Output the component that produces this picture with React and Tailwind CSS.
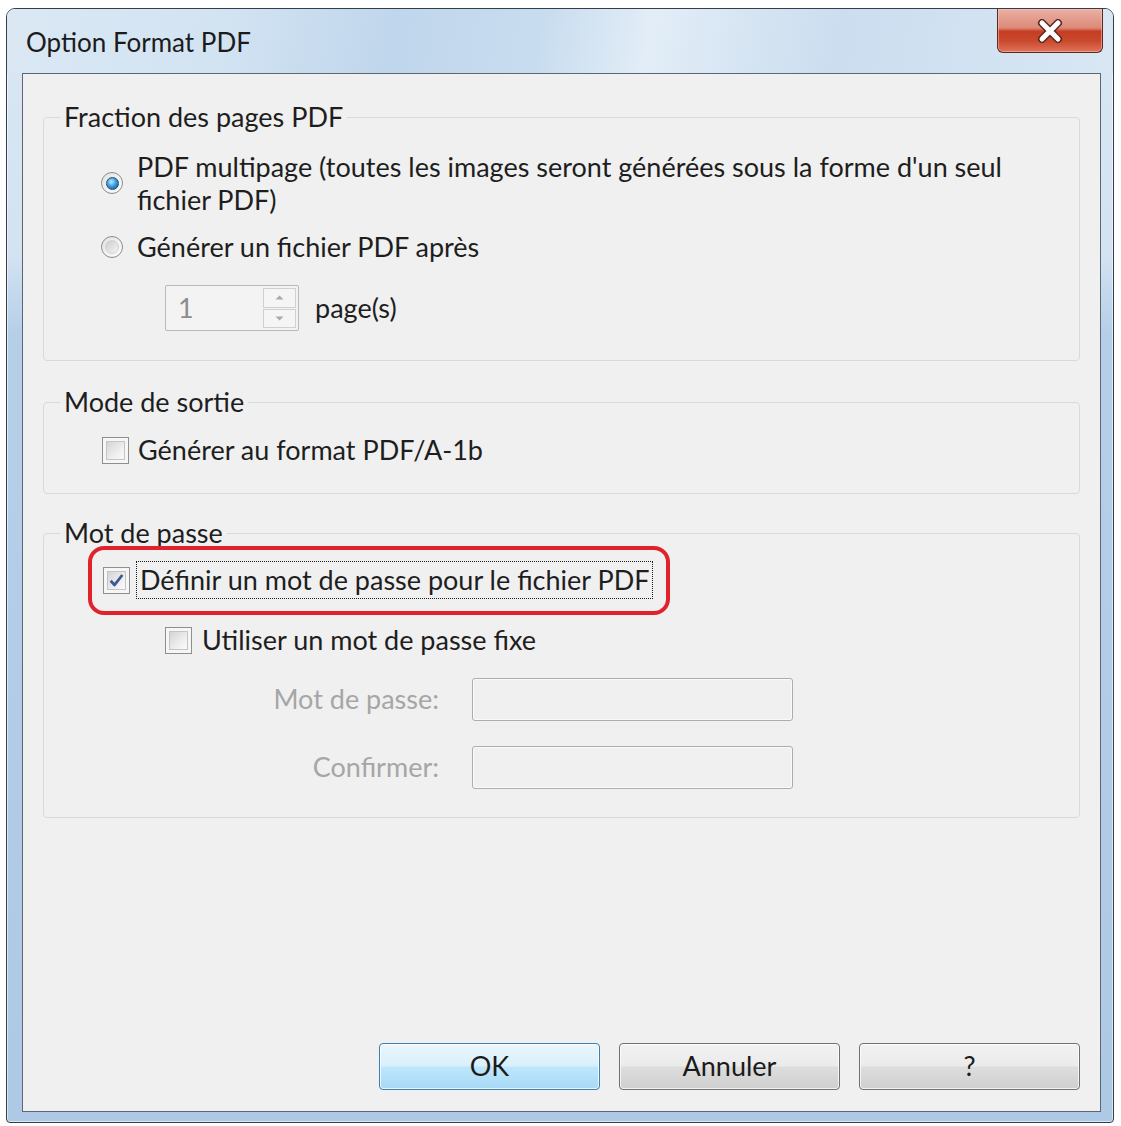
import React from "react";

function Radio({ checked }) {
  return (
    <span className="flex h-[22px] w-[22px] shrink-0 items-center justify-center rounded-full border border-[#8a8c8e] bg-[linear-gradient(135deg,#e2e2e2_0%,#ffffff_100%)]">
      {checked ? (
        <span className="h-[13px] w-[13px] rounded-full border border-[#1d4f7e] bg-[radial-gradient(circle_at_40%_35%,#c2ecff_0%,#3d9de0_45%,#0c4c8c_100%)]" />
      ) : (
        <span className="h-[14px] w-[14px] rounded-full border border-[#d2d2d2] bg-[linear-gradient(135deg,#cdcdcd_0%,#f5f5f5_100%)]" />
      )}
    </span>
  );
}

function Checkbox({ checked }) {
  return (
    <span className="flex h-[27px] w-[27px] shrink-0 items-center justify-center border border-[#8e8f8f] bg-[#f6f6f6]">
      <span className="flex h-[19px] w-[19px] items-center justify-center border border-[#c4c4c4] bg-[linear-gradient(135deg,#d4d4d4_0%,#eeeeee_60%,#fbfbfb_100%)]">
        {checked && (
          <svg width="17" height="17" viewBox="0 0 16 16">
            <path d="M2.5 8.2 L6.2 12.2 L13.5 2.8" fill="none" stroke="#3e5996" strokeWidth="2.6" strokeLinejoin="round" />
          </svg>
        )}
      </span>
    </span>
  );
}

function SpinBox() {
  return (
    <div className="flex h-[46px] w-[134px] rounded-[2px] border border-[#b8b8b8] bg-[#f3f3f3]">
      <span className="flex-1 pl-[12px] leading-[44px] text-[#8d8d8d]">1</span>
      <div className="my-[2px] mr-[2px] flex w-[33px] flex-col gap-[1px]">
        <span className="flex flex-1 items-center justify-center border border-[#d0d0d0] bg-[#f5f5f5]">
          <svg width="9" height="5" viewBox="0 0 9 5">
            <path d="M0.5 4.5 L4.5 0.5 L8.5 4.5 Z" fill="#a9a9a9" />
          </svg>
        </span>
        <span className="flex flex-1 items-center justify-center border border-[#d0d0d0] bg-[#f5f5f5]">
          <svg width="9" height="5" viewBox="0 0 9 5">
            <path d="M0.5 0.5 L4.5 4.5 L8.5 0.5 Z" fill="#a9a9a9" />
          </svg>
        </span>
      </div>
    </div>
  );
}

function Field() {
  return (
    <div className="ml-[33px] h-[43px] w-[321px] rounded-[3px] border border-[#adadad] bg-[#f0f0f0] shadow-[inset_0_0_0_1px_#fafafa]" />
  );
}

function Button({ children, primary }) {
  const look = primary
    ? "border-[#3c7fb1] bg-[linear-gradient(180deg,#eaf6fd_0%,#d9f0fc_48%,#bee6fd_52%,#a7d9f5_100%)]"
    : "border-[#707070] bg-[linear-gradient(180deg,#f2f2f2_0%,#ebebeb_48%,#dddddd_52%,#cfcfcf_100%)]";
  return (
    <button
      type="button"
      className={`flex h-[47px] w-[221px] items-center justify-center rounded-[4px] border shadow-[inset_0_0_0_1px_rgba(255,255,255,0.75)] text-[#1b1b1b] ${look}`}
    >
      {children}
    </button>
  );
}

function CloseButton() {
  return (
    <button
      type="button"
      className="mr-[10px] flex h-[44px] w-[106px] items-center justify-center rounded-b-[6px] border border-t-0 border-[#5b2a22] bg-[linear-gradient(180deg,#eab0a4_0%,#dc8a78_44%,#c53d22_52%,#c94a2e_75%,#e1745a_100%)] shadow-[inset_0_0_0_1px_rgba(255,210,200,0.45)]"
    >
      <svg width="30" height="24" viewBox="0 0 30 24">
        <path d="M7 4 L23 20 M23 4 L7 20" stroke="#5a2a22" strokeWidth="8" strokeLinecap="round" />
        <path d="M7 4 L23 20 M23 4 L7 20" stroke="#ffffff" strokeWidth="5" strokeLinecap="round" />
      </svg>
    </button>
  );
}

export default function App() {
  return (
    <div className="h-[1126px] w-[1121px] bg-white pl-[6px] pt-[8px] font-['Lato','Liberation_Sans',sans-serif] text-[27px] text-[#1e1e1e]">
      <div className="flex h-[1115px] w-[1108px] flex-col overflow-hidden rounded-t-[9px] rounded-b-[4px] border border-[#363d45] bg-[linear-gradient(180deg,#dae7f4_0%,#d3e3f2_22%,#b6cfe9_29%,#aec9e5_100%)] shadow-[inset_0_0_0_1px_rgba(255,255,255,0.55)]">
        {/* title bar */}
        <div className="flex h-[64px] shrink-0 items-start justify-between bg-[linear-gradient(100deg,#dbe8f4_0%,#d2e3f2_20%,#c0d6ec_35%,#c8dcef_48%,#e2edf7_58%,#cbddef_75%,#d9e7f4_100%)]">
          <div className="pl-[19px] pt-[16px] text-[26px] leading-[34px] text-[#1b1b1b]">Option Format PDF</div>
          <CloseButton />
        </div>

        {/* client area */}
        <div className="flex flex-1 pb-[10px] pl-[15px] pr-[12px]">
          <div className="flex flex-1 flex-col border border-[#5b6774] bg-[#f0f0f0]">
            <fieldset className="mx-[20px] mt-[26px] h-[261px] shrink-0 rounded-[4px] border border-[#d3dbe2] p-0">
              <legend className="ml-[16px] px-[4px] leading-[34px]">Fraction des pages PDF</legend>
              <div className="flex flex-col pl-[57px] pt-[16px]">
                <div className="flex items-center gap-[14px]">
                  <Radio checked />
                  <div className="whitespace-nowrap leading-[33px]">
                    PDF multipage (toutes les images seront générées sous la forme d'un seul
                    <br />
                    fichier PDF)
                  </div>
                </div>
                <div className="mt-[15px] flex items-center gap-[14px]">
                  <Radio />
                  <span className="leading-[32px]">Générer un fichier PDF après</span>
                </div>
                <div className="ml-[64px] mt-[22px] flex items-center gap-[16px]">
                  <SpinBox />
                  <span>page(s)</span>
                </div>
              </div>
            </fieldset>

            <fieldset className="mx-[20px] mt-[24px] h-[109px] shrink-0 rounded-[4px] border border-[#d3dbe2] p-0">
              <legend className="ml-[16px] px-[4px] leading-[34px]">Mode de sortie</legend>
              <div className="flex items-center gap-[9px] pl-[58px] pt-[16px]">
                <Checkbox />
                <span className="leading-[30px]">Générer au format PDF/A-1b</span>
              </div>
            </fieldset>

            <fieldset className="mx-[20px] mt-[22px] h-[302px] shrink-0 rounded-[4px] border border-[#d3dbe2] p-0">
              <legend className="ml-[16px] px-[4px] leading-[34px]">Mot de passe</legend>
              <div className="flex flex-col pt-[11px]">
                <div className="relative ml-[59px] flex w-fit items-center gap-[6px]">
                  <Checkbox checked />
                  <span className="border border-dotted border-[#1a1a1a] px-[3px] leading-[36px]">
                    Définir un mot de passe pour le fichier PDF
                  </span>
                  <span className="pointer-events-none absolute -bottom-[16px] -left-[15px] -right-[17px] -top-[15px] rounded-[16px] border-[4px] border-[#e2222b]" />
                </div>
                <div className="ml-[121px] mt-[26px] flex items-center gap-[10px]">
                  <Checkbox />
                  <span className="leading-[30px]">Utiliser un mot de passe fixe</span>
                </div>
                <div className="mt-[23px] flex items-center">
                  <span className="w-[395px] text-right text-[#a6a6a6]">Mot de passe:</span>
                  <Field />
                </div>
                <div className="mt-[25px] flex items-center">
                  <span className="w-[395px] text-right text-[#a6a6a6]">Confirmer:</span>
                  <Field />
                </div>
              </div>
            </fieldset>

            <div className="mt-auto flex justify-end gap-[19px] pb-[21px] pr-[20px]">
              <Button primary>OK</Button>
              <Button>Annuler</Button>
              <Button>?</Button>
            </div>
          </div>
        </div>
      </div>
    </div>
  );
}
